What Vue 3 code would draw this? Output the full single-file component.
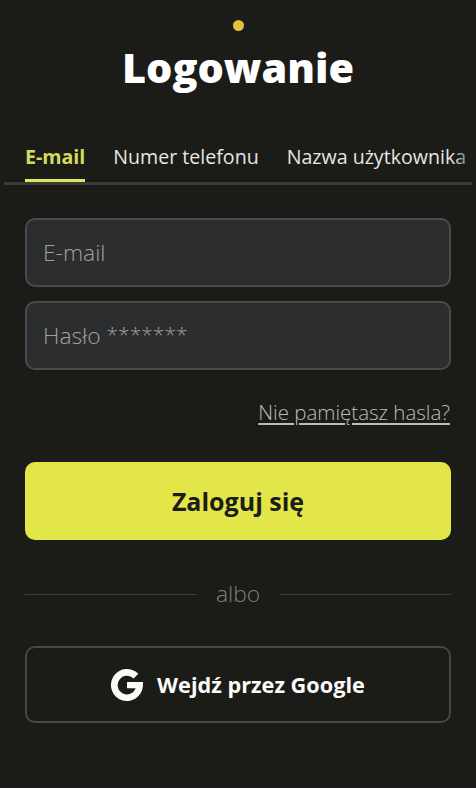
<script setup>
const tabs = ['E-mail', 'Numer telefonu', 'Nazwa użytkownika']
</script>

<template>
  <main class="page">
    <div class="top">
      <span class="dot"></span>
      <h1 class="title">Logowanie</h1>
    </div>
    <nav class="tabs">
      <span v-for="(t, i) in tabs" :key="t" class="tab" :class="{ active: i === 0 }">{{ t }}</span>
      <span class="fade"></span>
    </nav>
    <form class="form" @submit.prevent>
      <div class="field"><span>E-mail</span></div>
      <div class="field"><span>Hasło <i class="stars">*******</i></span></div>
      <a class="forgot">Nie pamiętasz hasla?</a>
      <button class="login" type="button">Zaloguj się</button>
      <div class="or"><span class="rule"></span><span class="or-text">albo</span><span class="rule"></span></div>
      <button class="google" type="button">
        <svg class="g" viewBox="0 0 32 32" aria-hidden="true">
          <path d="M27.3 4.7A16 16 0 1 0 31.9 17.6L32 13H16V19.3H24.7A9.3 9.3 0 1 1 22.6 9.5Z" fill="#fbfbf8"/>
        </svg>
        <span>Wejdź przez Google</span>
      </button>
    </form>
  </main>
</template>

<style>
html, body { margin: 0; background: #1b1b18; }
</style>

<style scoped>
.page {
  width: 476px;
  height: 788px;
  box-sizing: border-box;
  overflow: hidden;
  background: #1b1b18;
  font-family: "Open Sans", "Liberation Sans", sans-serif;
  color: #fff;
}
.top {
  display: flex;
  flex-direction: column;
  align-items: center;
  padding-top: 20px;
  height: 138px;
  box-sizing: border-box;
}
.dot {
  width: 11px;
  height: 11px;
  border-radius: 50%;
  background: #e2c33c;
}
.title {
  margin: 9px 0 0;
  font-size: 41.4px;
  line-height: 55px;
  font-weight: 800;
  color: #fff;
}
.tabs {
  position: relative;
  display: flex;
  gap: 28px;
  margin: 0 4px;
  padding-left: 21px;
  height: 44px;
  border-bottom: 3px solid #3a3b38;
  overflow: hidden;
  white-space: nowrap;
  font-size: 19.6px;
  line-height: 37px;
  color: #e6e6e2;
}
.tab { position: relative; flex: none; height: 44px; }
.tab.active { color: #d4db5c; font-weight: 700; box-shadow: inset 0 -3px 0 #dfe566; }
.fade {
  position: absolute;
  right: 0;
  top: 0;
  width: 20px;
  height: 44px;
  background: linear-gradient(90deg, rgba(27,27,24,0), rgba(27,27,24,.75));
}
.form {
  display: flex;
  flex-direction: column;
  margin-top: 33px;
  padding: 0 25px;
}
.field {
  display: flex;
  align-items: center;
  height: 69px;
  box-sizing: border-box;
  padding: 0 16px;
  border: 2px solid #4a4c4c;
  border-radius: 10px;
  background: #2b2d2e;
  font-size: 22.8px;
  font-weight: 300;
  color: #a0a1a0;
}
.field + .field { margin-top: 14px; }
.stars {
  font-style: normal;
  font-size: 21px;
  vertical-align: 2px;
}
.forgot {
  align-self: flex-end;
  margin-top: 29px;
  margin-right: 1px;
  font-size: 20.5px;
  line-height: 26px;
  font-weight: 300;
  color: #bcbdba;
  text-decoration: underline;
  text-underline-offset: 3px;
}
.login {
  height: 78px;
  margin-top: 37px;
  border: 0;
  border-radius: 10px;
  background: #e3e648;
  color: #1c1c18;
  font: 700 25px "Open Sans", sans-serif;
}
.or {
  display: flex;
  align-items: center;
  margin-top: 40px;
  height: 28px;
}
.rule { flex: 1; height: 1px; background: #3c3d3a; }
.or-text {
  padding: 0 19px;
  font-size: 22.8px;
  line-height: 28px;
  font-weight: 300;
  color: #7f807d;
}
.google {
  display: flex;
  align-items: center;
  justify-content: center;
  gap: 14px;
  height: 77px;
  margin-top: 38px;
  background: transparent;
  border: 2px solid #474845;
  border-radius: 10px;
  color: #fbfbf8;
  font: 700 21.7px "Open Sans", sans-serif;
}
.g { width: 32px; height: 32px; flex: none; }
</style>
